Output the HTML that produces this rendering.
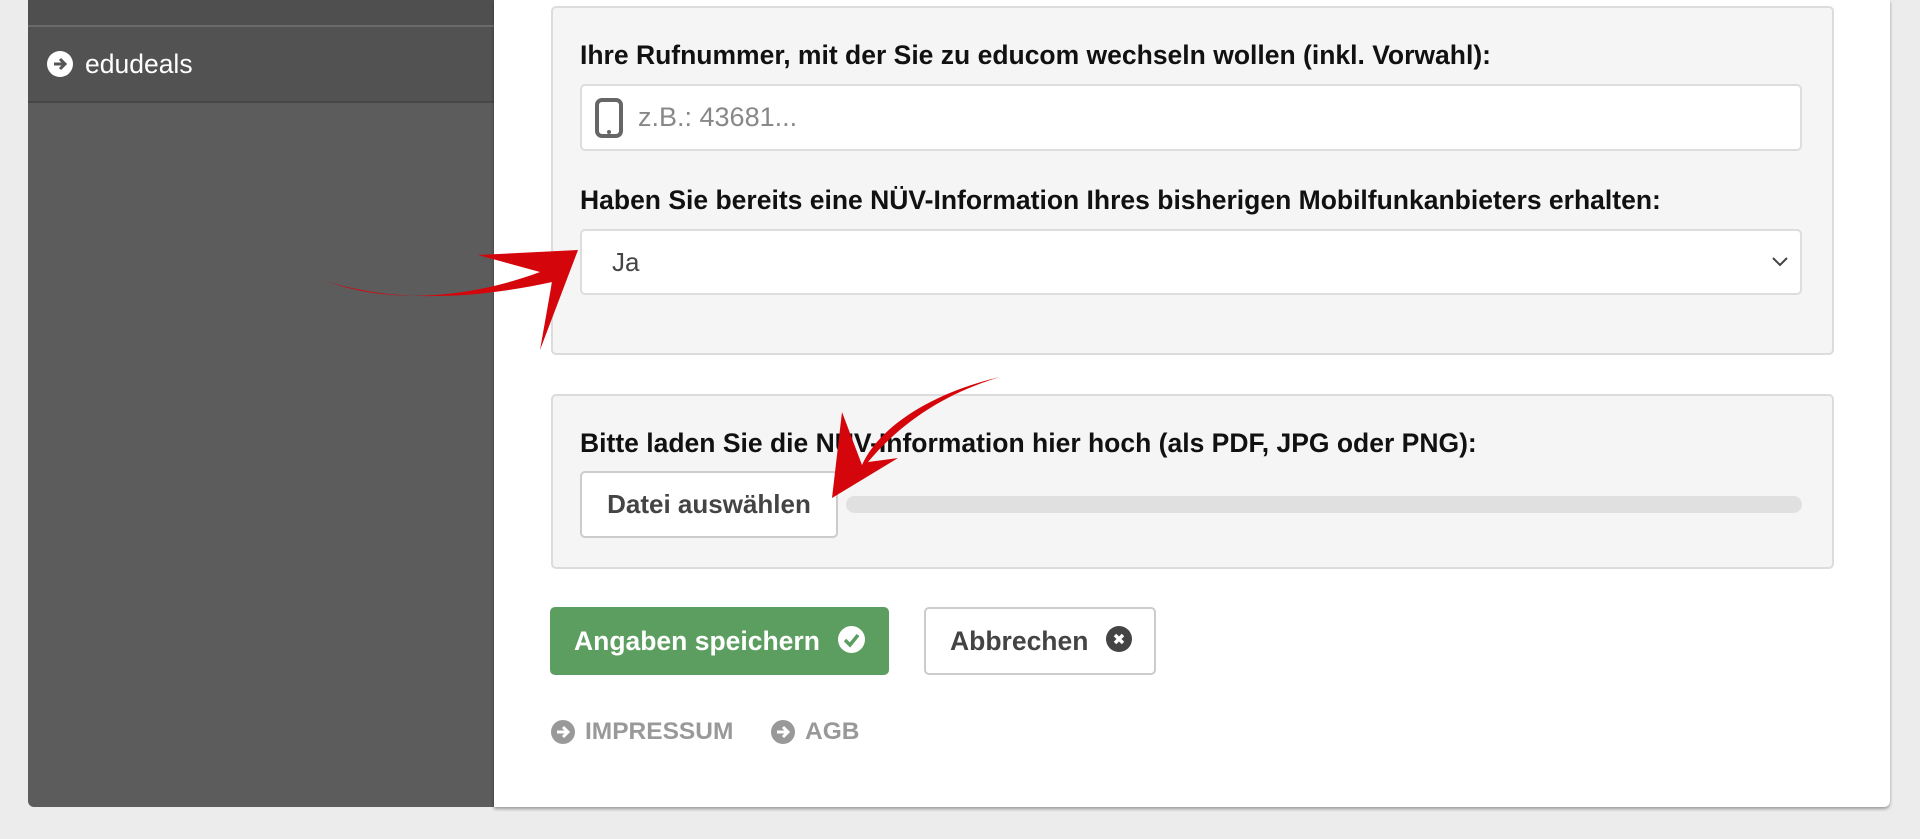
<!DOCTYPE html>
<html><head><meta charset="utf-8"><style>
*{box-sizing:border-box;margin:0;padding:0}
body{width:1920px;height:839px;background:#ececec;font-family:"Liberation Sans",Arial,sans-serif;position:relative;overflow:hidden}
.side{position:absolute;left:28px;top:0;width:466px;height:807px;background:#5c5c5c;border-radius:0 0 0 6px}
.side .top{height:27px;background:#4f4f4f;border-bottom:2px solid #6a6a6a}
.side .item{height:76px;background:#525252;border-bottom:2px solid #474747;color:#fff;font-size:26.5px;display:flex;align-items:center;padding-left:19px}
.ic{display:inline-block;border-radius:50%;background:#fff;position:relative;flex:none}
.main{position:absolute;left:494px;top:0;width:1396px;height:807px;background:#fff;border-radius:0 0 6px 0;box-shadow:0 2px 3px rgba(0,0,0,.35)}
.panel{position:absolute;left:57px;width:1283px;background:#f5f5f5;border:2px solid #dcdcdc;border-radius:5px}
.lbl{position:absolute;left:86px;font-weight:bold;font-size:26.5px;color:#111;white-space:nowrap}
.inp{position:absolute;left:86px;width:1222px;background:#fff;border:2px solid #ddd;border-radius:5px;font-size:26px;color:#555}
.btn{position:absolute;border-radius:5px;font-size:26.5px;font-weight:bold;display:flex;align-items:center;white-space:nowrap}
.foot{position:absolute;top:718px;font-size:24.5px;font-weight:bold;color:#999;display:flex;align-items:center}
</style></head><body>
<div class="side">
 <div class="top"></div>
 <div class="item"><span class="ic" style="width:26px;height:26px;margin-right:12px"><svg width="26" height="26" viewBox="0 0 26 26"><path d="M7 13h11M13 8l5 5-5 5" stroke="#555" stroke-width="3" fill="none"/></svg></span>edudeals</div>
</div>
<div class="main">
 <div class="panel" style="top:6px;height:349px"></div>
 <div class="lbl" style="top:40px">Ihre Rufnummer, mit der Sie zu educom wechseln wollen (inkl. Vorwahl):</div>
 <div class="inp" style="top:84px;height:67px;padding-left:56px;line-height:63px;color:#888;font-size:27px">z.B.: 43681...
  <svg style="position:absolute;left:12px;top:12px" width="30" height="40" viewBox="0 0 30 40"><rect x="3" y="2" width="24" height="36" rx="5" fill="none" stroke="#666" stroke-width="4"/><circle cx="15" cy="34" r="2" fill="#666"/></svg></div>
 <div class="lbl" style="top:185px">Haben Sie bereits eine NÜV-Information Ihres bisherigen Mobilfunkanbieters erhalten:</div>
 <div class="inp" style="top:229px;height:66px;padding-left:30px;line-height:62px;color:#444">Ja
  <svg style="position:absolute;right:12px;top:26px" width="16" height="10" viewBox="0 0 16 10"><path d="M1 1l7 7 7-7" stroke="#444" stroke-width="2" fill="none"/></svg></div>
 <div class="panel" style="top:394px;height:175px"></div>
 <div class="lbl" style="top:428px">Bitte laden Sie die NÜV-Information hier hoch (als PDF, JPG oder PNG):</div>
 <div class="btn" style="left:86px;top:471px;width:258px;height:67px;background:#fff;border:2px solid #ccc;color:#444;justify-content:center;font-size:26px">Datei auswählen</div>
 <div style="position:absolute;left:352px;top:496px;width:956px;height:17px;background:#e0e0e0;border-radius:9px"></div>
 <div class="btn" style="left:56px;top:607px;width:339px;height:68px;background:#5c9e5f;color:#fff;padding-left:24px">Angaben speichern<span class="ic" style="width:27px;height:27px;margin-left:18px;margin-top:-4px"><svg width="27" height="27" viewBox="0 0 27 27"><path d="M7 14l5 5 8-10" stroke="#5c9e5f" stroke-width="3.5" fill="none"/></svg></span></div>
 <div class="btn" style="left:430px;top:607px;width:232px;height:68px;background:#fff;border:2px solid #ccc;color:#444;padding-left:24px">Abbrechen<span class="ic" style="width:26px;height:26px;margin-left:18px;margin-top:-4px;background:#444"><svg width="26" height="26" viewBox="0 0 26 26"><path d="M9 9l8 8M17 9l-8 8" stroke="#fff" stroke-width="3.5"/></svg></span></div>
 <div class="foot" style="left:57px"><span class="ic" style="width:24px;height:24px;background:#999;margin-right:10px"><svg width="24" height="24" viewBox="0 0 24 24"><path d="M6 12h10M12 7l5 5-5 5" stroke="#fff" stroke-width="3" fill="none"/></svg></span>IMPRESSUM</div>
 <div class="foot" style="left:277px"><span class="ic" style="width:24px;height:24px;background:#999;margin-right:10px"><svg width="24" height="24" viewBox="0 0 24 24"><path d="M6 12h10M12 7l5 5-5 5" stroke="#fff" stroke-width="3" fill="none"/></svg></span>AGB</div>
</div>
<svg style="position:absolute;left:0;top:0" width="1920" height="839" viewBox="0 0 1920 839">
 <path d="M326 281 C390 305 470 298 540 272 L478 255 L578 250 L540 350 L552 282 C470 300 390 302 326 281Z" fill="#d4060b"/>
 <path d="M1000 377 C935 392 880 425 862 465 L842 412 L832 498 L898 458 L868 462 C905 418 950 392 1000 377Z" fill="#d4060b"/>
</svg>
</body></html>
